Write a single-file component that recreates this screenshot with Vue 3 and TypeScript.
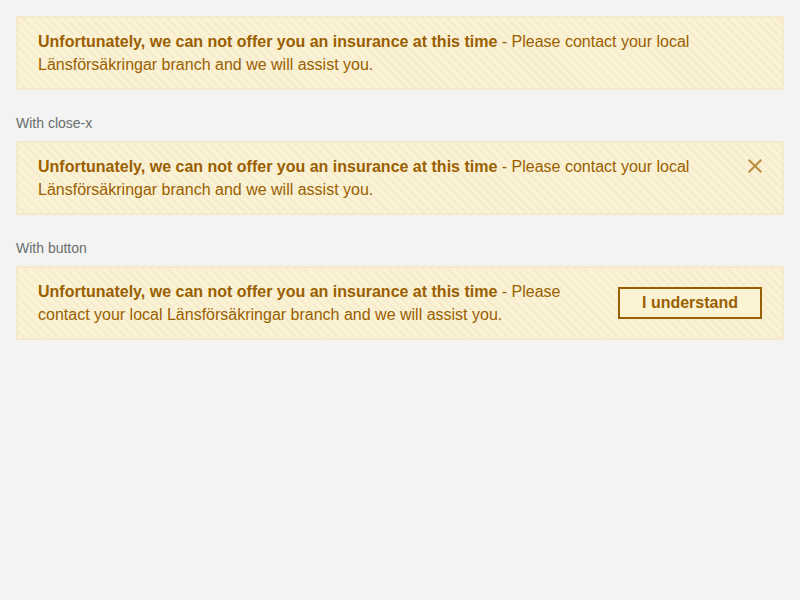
<script setup lang="ts">
interface Notice {
  label?: string
  action?: 'close' | 'button'
}

const notices: Notice[] = [
  {},
  { label: 'With close-x', action: 'close' },
  { label: 'With button', action: 'button' },
]
</script>

<template>
  <main class="page">
    <section v-for="(notice, i) in notices" :key="i" class="example">
      <p v-if="notice.label" class="label">{{ notice.label }}</p>
      <div class="alert" role="alert">
        <p class="message">
          <strong>Unfortunately, we can not offer you an insurance at this time</strong>
          - Please contact your local Länsförsäkringar branch and we will assist you.
        </p>
        <button v-if="notice.action === 'close'" class="close" type="button" aria-label="Close">
          <svg width="14" height="14" viewBox="0 0 14 14">
            <path d="M0.7 0.7L13.3 13.3M13.3 0.7L0.7 13.3" fill="none" stroke="currentColor" stroke-width="2" />
          </svg>
        </button>
        <button v-if="notice.action === 'button'" class="confirm" type="button">I understand</button>
      </div>
    </section>
  </main>
</template>

<style>
body {
  background: #f3f3f3;
}
</style>

<style scoped>
.page {
  padding: 16px;
  font-family: "Liberation Sans", Arial, sans-serif;
}
.example + .example {
  margin-top: 23px;
}
.label {
  margin: 0 0 8px;
  font-size: 14px;
  line-height: 20px;
  color: #6a6e6e;
}
.alert {
  display: flex;
  box-sizing: border-box;
  height: 74px;
  padding: 12px 20px;
  border: 2px solid #f5e9cc;
  color: #9a5f00;
  background-color: #fbf2d3;
  background-image: repeating-linear-gradient(45deg, transparent 0 4px, #f5ebcf 4px 6px);
}
.message {
  flex: 1;
  margin: 0;
  font-size: 16px;
  line-height: 23px;
}
.close {
  flex: none;
  display: flex;
  width: 14px;
  height: 14px;
  margin: 4px 0 0 40px;
  padding: 0;
  border: 0;
  background: none;
  color: #bb8b3d;
}
.confirm {
  flex: none;
  align-self: center;
  width: 144px;
  height: 32px;
  margin-left: 32px;
  padding: 0;
  border: 2px solid #9a5f00;
  background: #faf3d4;
  color: #9a5f00;
  font: bold 16px "Liberation Sans", Arial, sans-serif;
}
</style>
